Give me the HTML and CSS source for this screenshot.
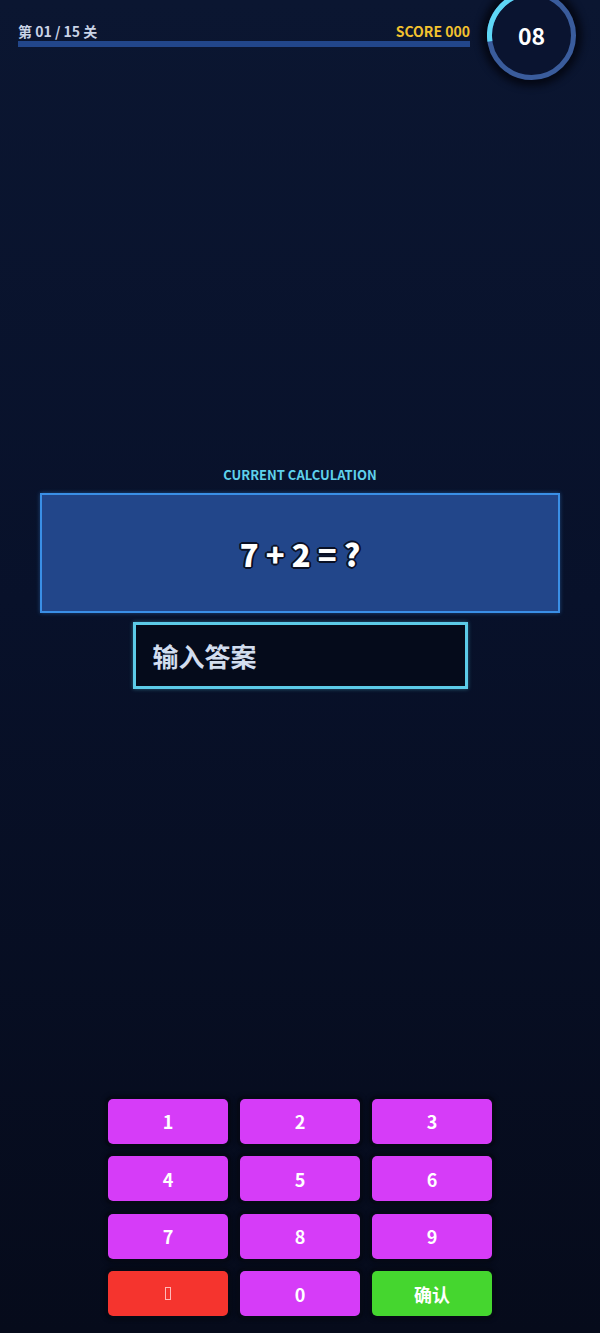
FILE: index.html
```html
<!DOCTYPE html>
<html lang="zh">
<head>
<meta charset="utf-8">
<title>Calculation</title>
<link rel="stylesheet" href="styles.css">
</head>
<body>
<main class="app">
  <header class="header">
    <div class="progress">
      <div class="progress-row">
        <span class="level">第 01 / 15 关</span>
        <span class="score">SCORE 000</span>
      </div>
      <div class="bar"></div>
    </div>
    <div class="timer">
      <svg class="ring" viewBox="0 0 89 89" width="89" height="89">
        <circle cx="44.5" cy="44.5" r="42" class="ring-track"/>
        <circle cx="44.5" cy="44.5" r="42" class="ring-fill" transform="rotate(172 44.5 44.5)"/>
      </svg>
      <span class="timer-num">08</span>
    </div>
  </header>

  <section class="stage">
    <div class="label">CURRENT CALCULATION</div>
    <div class="question">7 + 2 = ?</div>
    <div class="answer">输入答案</div>
  </section>

  <section class="keypad">
    <button class="key">1</button>
    <button class="key">2</button>
    <button class="key">3</button>
    <button class="key">4</button>
    <button class="key">5</button>
    <button class="key">6</button>
    <button class="key">7</button>
    <button class="key">8</button>
    <button class="key">9</button>
    <button class="key key-del"><span class="tofu"></span></button>
    <button class="key">0</button>
    <button class="key key-ok">确认</button>
  </section>
</main>
</body>
</html>
```

FILE: styles.css
```css
* { box-sizing: border-box; }

html, body {
  margin: 0;
  padding: 0;
}

body {
  background: linear-gradient(180deg, #0b1631 0%, #08112a 45%, #060b1b 100%);
  font-family: "Noto Sans CJK SC", "Noto Sans", sans-serif;
  font-weight: 700;
  color: #fff;
}

.app {
  height: 1333px;
  display: flex;
  flex-direction: column;
  overflow: hidden;
}

.header {
  display: flex;
  align-items: flex-start;
  gap: 17px;
  padding: 0 24px 0 18px;
}

.progress {
  flex: 1;
  padding-top: 23px;
}

.progress-row {
  display: flex;
  justify-content: space-between;
  font-size: 14px;
  line-height: 16px;
}

.level { color: #c9d3e6; }
.score { color: #f3c22f; }

.bar {
  margin-top: 2px;
  height: 6px;
  background: #22468a;
}

.timer {
  position: relative;
  width: 89px;
  height: 89px;
  margin-top: -9px;
  border-radius: 50%;
  box-shadow: 0 0 7px 6px rgba(3, 6, 16, 0.85);
  display: flex;
  align-items: center;
  justify-content: center;
}

.ring {
  position: absolute;
  left: 0;
  top: 0;
}

.ring-track {
  fill: #0a1430;
  stroke: #3a5c9c;
  stroke-width: 5;
}

.ring-fill {
  fill: none;
  stroke: #5ed7f6;
  stroke-width: 5;
  stroke-dasharray: 72 263.9;
}

.timer-num {
  position: relative;
  font-size: 23px;
  line-height: 1;
  color: #fff;
}

.stage {
  flex: 1;
  display: flex;
  flex-direction: column;
  align-items: center;
  justify-content: center;
  padding-bottom: 23px;
}

.label {
  font-size: 13px;
  line-height: 18px;
  color: #5fd1eb;
  margin-bottom: 9px;
}

.question {
  width: 520px;
  height: 120px;
  border: 2px solid #3a8fe6;
  background: #22468a;
  box-shadow: 0 0 4px rgba(58, 143, 230, 0.45);
  display: flex;
  align-items: center;
  justify-content: center;
  font-size: 31px;
  font-weight: 900;
  color: #fff;
  text-shadow:
    2px 0 0 #0a1126, -2px 0 0 #0a1126, 0 2px 0 #0a1126, 0 -2px 0 #0a1126,
    1.4px 1.4px 0 #0a1126, -1.4px -1.4px 0 #0a1126, 1.4px -1.4px 0 #0a1126, -1.4px 1.4px 0 #0a1126;
}

.answer {
  margin-top: 9px;
  width: 335px;
  height: 67px;
  border: 3px solid #5ccbe8;
  background: #050b1b;
  box-shadow: 0 0 4px rgba(92, 203, 232, 0.45);
  display: flex;
  align-items: center;
  padding-left: 17px;
  font-size: 26px;
  color: #d2ddef;
}

.keypad {
  display: grid;
  grid-template-columns: repeat(3, 119.5px);
  grid-auto-rows: 45px;
  gap: 12.5px;
  justify-content: center;
  padding-bottom: 17px;
}

.key {
  border: none;
  border-radius: 5px;
  background: #d63cf8;
  box-shadow: 0 0 0 3px #050916, 0 0 4px 3px rgba(3, 5, 12, 0.6);
  color: #fff;
  font-family: "Noto Sans CJK SC", "Noto Sans", sans-serif;
  font-weight: 700;
  font-size: 18px;
  display: flex;
  align-items: center;
  justify-content: center;
  padding: 0;
}

.key-del { background: #f5342e; }
.key-ok { background: #45d62f; }

.tofu {
  display: block;
  width: 6px;
  height: 13px;
  border: 1px solid rgba(255, 210, 210, 0.85);
}
```
